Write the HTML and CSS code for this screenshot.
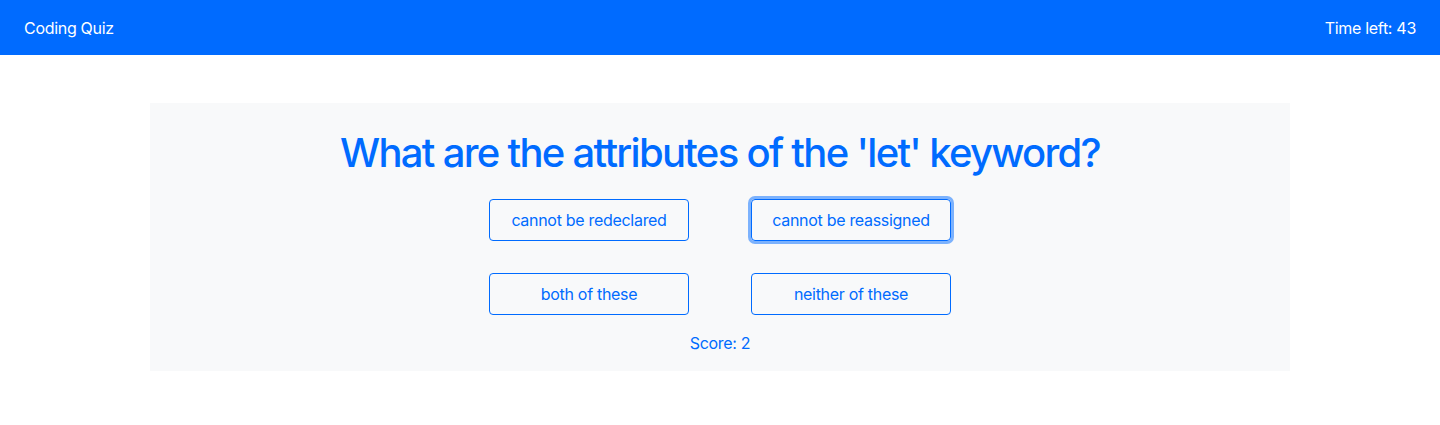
FILE: index.html
```html
<!DOCTYPE html>
<html lang="en">
<head>
<meta charset="utf-8">
<title>Coding Quiz</title>
<link rel="stylesheet" href="styles.css">
</head>
<body>
<nav class="navbar">
  <span class="brand">Coding Quiz</span>
  <span class="timer">Time left: 43</span>
</nav>
<main class="quiz">
  <h1 class="question">What are the attributes of the 'let' keyword?</h1>
  <div class="answers">
    <button class="answer">cannot be redeclared</button>
    <button class="answer focused">cannot be reassigned</button>
    <button class="answer">both of these</button>
    <button class="answer">neither of these</button>
  </div>
  <p class="score">Score: 2</p>
</main>
</body>
</html>
```
FILE: styles.css
```css
* { box-sizing: border-box; }
body {
  margin: 0;
  font-family: Inter, "Noto Sans", "Liberation Sans", sans-serif;
  font-size: 16px;
  letter-spacing: -0.3px;
  color: #212529;
  background: #fff;
}
.navbar {
  height: 55px;
  background: #006bff;
  color: #fff;
  display: flex;
  align-items: center;
  justify-content: space-between;
  padding: 0 24px;
  font-size: 16px;
}
.quiz {
  width: 1140px;
  margin: 48px auto 0;
  background: #f8f9fa;
  padding: 26px 0 18px;
  text-align: center;
  color: #006bff;
}
.question {
  margin: 0 0 22px;
  font-size: 40px;
  font-weight: 500;
  line-height: 48px;
  letter-spacing: -1.7px;
}
.answers {
  display: grid;
  grid-template-columns: 200px 200px;
  column-gap: 62px;
  row-gap: 32px;
  justify-content: center;
}
.answer {
  height: 42px;
  background: transparent;
  border: 1px solid #006bff;
  border-radius: 4px;
  color: #006bff;
  font-family: inherit;
  font-size: 16px;
  letter-spacing: -0.3px;
  padding: 0;
}
.answer.focused {
  box-shadow: 0 0 0 3px rgba(0, 107, 255, 0.5);
}
.score {
  margin: 18px 0 0;
  line-height: 20px;
  font-size: 16px;
}
```
